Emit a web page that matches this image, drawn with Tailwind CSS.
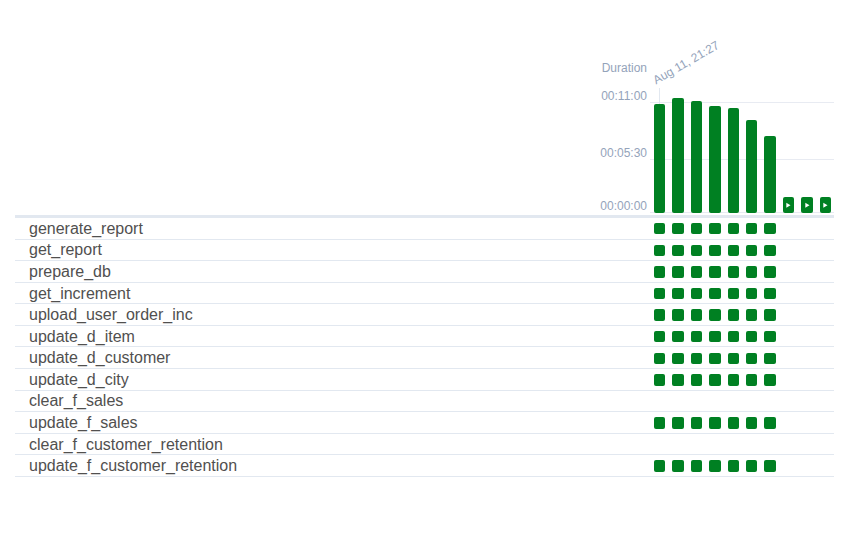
<!DOCTYPE html>
<html lang="en">
<head>
<meta charset="utf-8">
<meta name="viewport" content="width=device-width, initial-scale=1">
<title>DAG runs</title>
<script src="https://cdn.jsdelivr.net/npm/@tailwindcss/browser@4"></script>
</head>
<body class="bg-white pl-[15px] pr-4 font-['Liberation_Sans',Arial,sans-serif] text-[#51504f]">
<main>
  <section class="flex justify-end gap-[3px] border-b-3 border-[#e2e8f0] pt-[60px] text-xs leading-4 text-[#94a3ba]" aria-label="Run durations">
    <div class="flex flex-col text-right">
      <span>Duration</span>
      <span class="mt-3">00:11:00</span>
      <span class="mt-[41px]">00:05:30</span>
      <span class="mt-[37px] pb-px">00:00:00</span>
    </div>
    <div class="relative mt-7 mb-0.5 w-[184px]">
      <div class="absolute inset-x-0 top-3.5 h-px bg-[#e8ebf2]"></div>
      <div class="absolute inset-x-0 top-[71px] h-px bg-[#e8ebf2]"></div>
      <div class="absolute inset-x-0 bottom-0 h-px bg-[#e8ebf2]"></div>
      <div class="absolute top-0 left-[9px] h-4 w-px bg-[#e2e8f0]"></div>
      <span class="absolute -top-4 left-2 origin-bottom-left -rotate-30 whitespace-nowrap">Aug 11, 21:27</span>
      <div id="runs" class="relative grid h-[125px] grid-cols-10 items-end gap-[7px] pr-[3px] pl-1"></div>
    </div>
  </section>
  <table class="h-[259px] w-full border-collapse text-base leading-5">
    <tbody id="tasks"></tbody>
  </table>
</main>
<script>
  const durations = [109, 115, 112, 107, 105, 93, 77, 16, 16, 16];
  const manualFrom = 7;
  const playIcon = '<svg class="mb-1 h-2 w-2" viewBox="0 0 8 8" aria-hidden="true"><path d="M2.3 1.7v5l4.2-2.5z" fill="#fff"/></svg>';
  document.getElementById('runs').innerHTML = durations.map((height, i) =>
    `<button type="button" aria-label="Run ${i + 1}" class="flex items-end justify-center rounded-xs bg-[#008022]" style="height:${height}px">${i >= manualFrom ? playIcon : ''}</button>`
  ).join('');

  const tasks = [
    ['generate_report', true], ['get_report', true], ['prepare_db', true], ['get_increment', true],
    ['upload_user_order_inc', true], ['update_d_item', true], ['update_d_customer', true],
    ['update_d_city', true], ['clear_f_sales', false], ['update_f_sales', true],
    ['clear_f_customer_retention', false], ['update_f_customer_retention', true]
  ];
  document.getElementById('tasks').innerHTML = tasks.map(([name, ran]) => {
    const squares = ran
      ? Array.from({ length: 7 }, (_, i) => `<button type="button" aria-label="${name}, run ${i + 1}" class="aspect-square rounded-xs bg-[#008022]"></button>`).join('')
      : '';
    return `<tr class="shadow-[inset_0_-1px_0_#e2e8f0]">
      <th scope="row" class="p-0 pl-3.5 text-left font-normal">${name}</th>
      <td class="w-[184px] p-0"><div class="grid grid-cols-10 gap-[7px] pr-[3px] pl-1">${squares}</div></td>
    </tr>`;
  }).join('');
</script>
</body>
</html>
